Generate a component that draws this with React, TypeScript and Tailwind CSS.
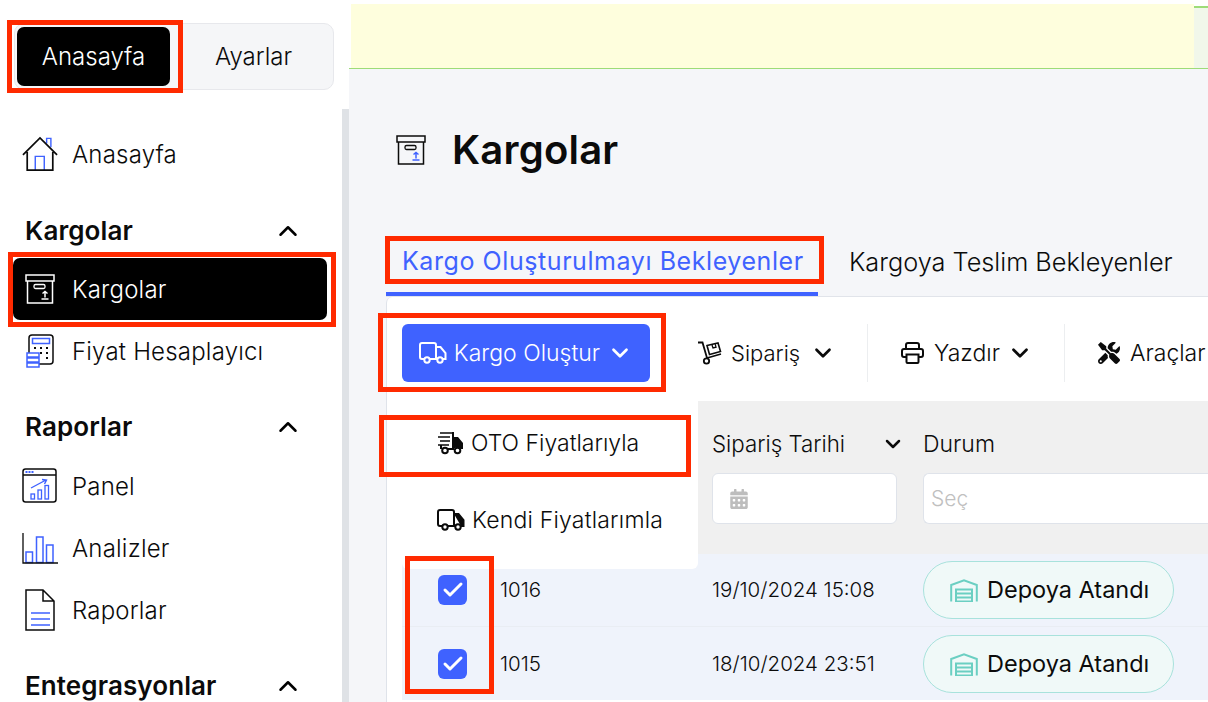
import React from "react";
import { ChevronDown, ChevronUp, Check } from "lucide-react";
import { FaCalendarAlt, FaTools } from "react-icons/fa";

const B = "#3f62ff";
const K = "#0b0b0b";

function HomeIcon() {
  return (
    <svg width="36" height="36" viewBox="0 0 38 38" fill="none" className="shrink-0">
      <path d="M26 8V2.500h4.500V12" stroke={B} strokeWidth="1.500" />
      <path d="M14 36V21.500h9.500V36" stroke={B} strokeWidth="1.500" />
      <path d="M1 20 19 2l18 18M5.500 17v19h27V17" stroke={K} strokeWidth="1.800" />
    </svg>
  );
}
function BoxIcon({ c = K, a = K, s = 30 }: { c?: string; a?: string; s?: number }) {
  return (
    <svg width={s} height={s} viewBox="0 0 30 30" fill="none" className="shrink-0">
      <path d="M1 1h28v6H1zM2.500 7v22h25V7" stroke={c} strokeWidth="1.500" />
      <rect x="9" y="10.500" width="11" height="4" rx="1.500" stroke={c} strokeWidth="1.300" />
      <path d="M20 17.500v6M17.500 19.500l2.500-2 2.500 2M16.500 25h7" stroke={a} strokeWidth="1.500" />
    </svg>
  );
}
function CalcIcon() {
  return (
    <svg width="30" height="34" viewBox="0 0 30 34" fill="none" className="shrink-0">
      <rect x="4" y="1" width="24" height="29" rx="3" stroke={K} strokeWidth="1.500" />
      <rect x="7.500" y="4.500" width="17" height="5" stroke={B} strokeWidth="1.500" />
      <path d="M9 14h2m4 0h2m4 0h2M15 19h2m4 0h2M21 24h2" stroke={K} strokeWidth="2" />
      <path d="M2 19h12v4H2zM2 24h12v4H2zM2 29h12v4H2z" fill="#fff" stroke={B} strokeWidth="1.500" />
    </svg>
  );
}
function PanelIcon() {
  return (
    <svg width="36" height="36" viewBox="0 0 36 36" fill="none" className="shrink-0">
      <rect x="1" y="1" width="33" height="33" rx="2.500" stroke={K} strokeWidth="1.500" />
      <path d="M1 7h33" stroke={K} strokeWidth="1.300" />
      <path d="M3.500 4h8" stroke={B} strokeWidth="2" strokeDasharray="2 1" />
      <path d="M9 20l15-8m-4-.5 4.500.5-2 4" stroke={B} strokeWidth="1.400" />
      <rect x="9" y="26" width="3.500" height="5" stroke={B} strokeWidth="1.300" />
      <rect x="16" y="22" width="3.500" height="9" stroke={B} strokeWidth="1.300" />
      <rect x="23" y="17.500" width="3.500" height="13.500" stroke={B} strokeWidth="1.300" />
    </svg>
  );
}
function BarsIcon() {
  return (
    <svg width="36" height="32" viewBox="0 0 36 32" fill="none" className="shrink-0">
      <path d="M4 20h6.500v10.500H4zM14.500 5H21v25.500h-6.500zM24.500 13H31v17.500h-6.500z" stroke={B} strokeWidth="1.500" />
      <path d="M1 1v30h35" stroke={K} strokeWidth="1.300" />
    </svg>
  );
}
function DocIcon() {
  return (
    <svg width="30" height="42" viewBox="0 0 30 42" fill="none" className="shrink-0">
      <path d="M1 1h17l11 11v29H1zM18 1v11h11" stroke={K} strokeWidth="1.500" />
      <path d="M6 24h19M6 30h19M6 36h19" stroke={B} strokeWidth="1.400" />
    </svg>
  );
}
function TruckIcon({ c = "#fff", solid = false, s = 28 }: { c?: string; solid?: boolean; s?: number }) {
  return (
    <svg width={s} height={s * 0.79} viewBox="0 0 28 22" fill="none" className="shrink-0">
      <path d="M5 17H3a2 2 0 0 1-2-2V3a2 2 0 0 1 2-2h12a2 2 0 0 1 2 2v14h-6" stroke={c} strokeWidth="2" />
      <path d="M17 5h4.500l5 6v6H24" stroke={c} strokeWidth="2" fill={solid ? c : "none"} />
      <circle cx="8" cy="18" r="2.700" stroke={c} strokeWidth="2" />
      <circle cx="21" cy="18" r="2.700" stroke={c} strokeWidth="2" />
    </svg>
  );
}
function FastTruck() {
  return (
    <svg width="27" height="24" viewBox="0 0 27 24" fill="none" className="shrink-0">
      <path d="M3 2h13M1 6h12M3 10h10M1 14h11" stroke={K} strokeWidth="1.700" />
      <path d="M4 18V14M16 1v17h-5" stroke={K} strokeWidth="2" />
      <path d="M16 6h5l5 6v6h-2.500L20 16l-4 2z" fill={K} />
      <circle cx="8" cy="19.500" r="2.800" stroke={K} strokeWidth="2" fill="#fff" />
      <circle cx="20.500" cy="19.500" r="2.800" stroke={K} strokeWidth="2" fill="#fff" />
    </svg>
  );
}
function HandTruck() {
  return (
    <svg width="26" height="24" viewBox="0 0 26 24" fill="none" className="shrink-0">
      <path d="M1 1.500h4.500L10 17l14-4" stroke={K} strokeWidth="1.800" />
      <path d="M10 4.500 21 2l2.500 8.500-11 3z" stroke={K} strokeWidth="1.600" />
      <path d="M15 4l1 3 3-.8-.8-3" stroke={K} strokeWidth="1.300" />
      <circle cx="9.500" cy="20" r="2.700" stroke={K} strokeWidth="1.800" />
    </svg>
  );
}
function PrinterIcon() {
  return (
    <svg width="23" height="22" viewBox="0 0 23 22" fill="none" className="shrink-0">
      <path d="M5 7V3a2 2 0 0 1 2-2h9a2 2 0 0 1 2 2v4M5 15H3a2 2 0 0 1-2-2V9a2 2 0 0 1 2-2h17a2 2 0 0 1 2 2v4a2 2 0 0 1-2 2h-2" stroke={K} strokeWidth="2" />
      <path d="M5.500 12.500h12V20a1 1 0 0 1-1 1h-10a1 1 0 0 1-1-1z" stroke={K} strokeWidth="2" />
    </svg>
  );
}
function Warehouse() {
  return (
    <svg width="28" height="23" viewBox="0 0 28 23" fill="none" className="mt-[1px] shrink-0">
      <path d="M1.200 22.500V6L14 1.200 26.800 6v16.500" stroke="#6bcfc2" strokeWidth="2" />
      <path d="M6 10.500h16v12H6zM6 14.500h16M6 18.500h16" stroke="#6bcfc2" strokeWidth="2" />
    </svg>
  );
}
const NavRow = ({ icon, label, cls = "" }: { icon: React.ReactNode; label: string; cls?: string }) => (
  <div className={`flex items-center ${cls}`}>
    <div className="mr-[15px] flex w-[36px] shrink-0 justify-center">{icon}</div>
    <span className="-ml-[1px] pt-[1px] text-[24px] font-light tracking-[0.2px]">{label}</span>
  </div>
);
const Section = ({ label, cls = "" }: { label: string; cls?: string }) => (
  <div className={`flex items-center justify-between pl-[3px] pr-[46px] ${cls}`}>
    <span className="text-[26px] font-semibold leading-[30px] tracking-[0.1px]">{label}</span>
    <ChevronUp size={30} strokeWidth={2} className="text-black" />
  </div>
);
const Box = ({ cls }: { cls: string }) => (
  <div className={`pointer-events-none absolute z-30 border-[5px] border-[#ff2a00] ${cls}`} />
);
const Status = () => (
  <div className="flex h-[58px] w-[251px] items-center gap-[9px] rounded-full border border-[#a8e2dc] bg-[#f0f9f8] pl-[26px]">
    <Warehouse />
    <span className="whitespace-nowrap text-[23.500px] font-normal">Depoya Atandı</span>
  </div>
);
const Row = ({ id, date, cls = "" }: { id: string; date: string; cls?: string }) => (
  <div className={`flex items-center bg-[#eff3fb] ${cls}`}>
    <div className="flex w-[98px] shrink-0 justify-end pr-[33px]">
      <div className="flex h-[30px] w-[29px] items-center justify-center rounded-[6px] bg-[#3f62ff]">
        <Check size={24} strokeWidth={3} className="text-white" />
      </div>
    </div>
    <span className="w-[212px] shrink-0 pt-[1px] text-[20.500px] font-light">{id}</span>
    <span className="w-[211px] shrink-0 pt-[1px] text-[20.500px] font-light">{date}</span>
    <Status />
  </div>
);

export default function App() {
  return (
    <div className="relative flex h-[702px] w-[1208px] overflow-hidden bg-white font-['Inter',sans-serif] text-[#0b0b0b]">
      <aside className="relative flex w-[349px] shrink-0 flex-col overflow-hidden bg-white pl-[14px] pt-[23px]">
        <div className="flex h-[67px] w-[320px] items-center rounded-[10px] border border-[#e7e8ec] bg-[#f5f6f8] pl-[2px]">
          <div className="flex h-[59px] w-[153px] items-center justify-center rounded-[7px] bg-black text-[24px] font-light text-white">Anasayfa</div>
          <div className="flex-1 pl-[4px] text-center text-[24px] font-light">Ayarlar</div>
        </div>
        <div className="absolute bottom-0 right-0 top-[109px] w-[7px] bg-[#dfe2e6]" />
        <div className="flex flex-col pl-[8px]">
          <NavRow icon={<HomeIcon />} label="Anasayfa" cls="mt-[44px] h-[40px]" />
          <Section label="Kargolar" cls="mt-[42px]" />
          <div className="-ml-[9px] mt-[12px] flex h-[62px] w-[314px] items-center rounded-[7px] bg-black pl-[9px] text-white">
            <NavRow icon={<BoxIcon c="#fff" a="#fff" />} label="Kargolar" />
          </div>
          <NavRow icon={<CalcIcon />} label="Fiyat Hesaplayıcı" cls="mt-[9px] h-[44px]" />
          <Section label="Raporlar" cls="mt-[39px]" />
          <NavRow icon={<PanelIcon />} label="Panel" cls="mt-[26px] h-[36px]" />
          <NavRow icon={<BarsIcon />} label="Analizler" cls="mt-[27px] h-[34px]" />
          <NavRow icon={<DocIcon />} label="Raporlar" cls="mt-[24px] h-[42px]" />
          <Section label="Entegrasyonlar" cls="mt-[40px]" />
        </div>
      </aside>

      <main className="relative flex min-w-0 flex-1 flex-col bg-[#f5f6f9]">
        <div className="flex h-[69px] shrink-0 border-b border-[#9ddc78] bg-white pl-[2px] pt-[4px]">
          <div className="w-[843px] bg-[#fefedd]" />
          <div className="mt-[2px] flex-1 border-t-2 border-[#9ddc78] bg-[#f1f7ea]" />
        </div>
        <div className="ml-[47px] mt-[59px] flex h-[44px] shrink-0 items-center gap-[26px]">
          <BoxIcon a={B} />
          <h1 className="text-[40px] font-semibold tracking-[0.2px]">Kargolar</h1>
        </div>
        <div className="ml-[37px] mt-[56px] flex h-[69px] shrink-0 items-end border-b border-[#e1e4ea]">
          <div className="flex h-[60px] w-[432px] items-start border-b-[4px] border-[#3f62ff] pl-[16px] pt-[7px]">
            <span className="whitespace-nowrap text-[25px] font-normal tracking-[0.57px] text-[#3f62ff]">Kargo Oluşturulmayı Bekleyenler</span>
          </div>
          <div className="flex h-[60px] items-start pl-[31px] pt-[7px]">
            <span className="whitespace-nowrap text-[25.300px] font-light">Kargoya Teslim Bekleyenler</span>
          </div>
        </div>
        <div className="ml-[37px] flex-1 rounded-tl-[6px] border-l border-[#dfe3ea] bg-white pl-[15px]">
          <div className="flex h-[104px] items-start pt-[27px]">
            <div className="flex h-[58px] w-[248px] shrink-0 items-center justify-center gap-[7px] rounded-[6px] bg-[#3f62ff] text-white">
              <TruckIcon />
              <span className="text-[23px] font-light">Kargo Oluştur</span>
              <ChevronDown size={26} strokeWidth={2.500} />
            </div>
            <div className="flex h-[58px] w-[218px] shrink-0 items-center gap-[8px] border-r border-[#eceef0] pl-[47px]">
              <HandTruck />
              <span className="text-[22px] font-light">Sipariş</span>
              <ChevronDown size={26} strokeWidth={2.500} className="ml-[2px]" />
            </div>
            <div className="flex h-[58px] w-[197px] shrink-0 items-center gap-[10px] border-r border-[#eceef0] pl-[33px]">
              <PrinterIcon />
              <span className="text-[23px] font-light">Yazdır</span>
              <ChevronDown size={26} strokeWidth={2.500} className="-ml-[3px]" />
            </div>
            <div className="flex h-[58px] shrink-0 items-center gap-[10px] pl-[33px]">
              <FaTools size={22} />
              <span className="text-[23px] font-light">Araçlar</span>
            </div>
          </div>
          <div className="flex h-[153px] bg-[#f0f0f0] pl-[310px] pt-[27px]">
            <div className="w-[185px] shrink-0">
              <div className="flex h-[32px] items-center justify-between">
                <span className="whitespace-nowrap text-[22.300px] font-light">Sipariş Tarihi</span>
                <ChevronDown size={24} strokeWidth={2.500} className="-mr-[8px]" />
              </div>
              <div className="mt-[13px] flex h-[51px] items-center rounded-[6px] border border-[#dfe3ea] bg-white pl-[16px]">
                <FaCalendarAlt size={20} className="text-[#bdbdbd]" />
              </div>
            </div>
            <div className="ml-[26px] flex-1">
              <div className="flex h-[32px] items-center text-[23px] font-light">Durum</div>
              <div className="mt-[13px] flex h-[51px] items-center rounded-l-[6px] border border-r-0 border-[#dfe3ea] bg-white pl-[7px] text-[21px] font-light text-[#c0c0c0]">Seç</div>
            </div>
          </div>
          <Row id="1016" date="19/10/2024 15:08" cls="h-[73px] border-b border-[#e9edf3]" />
          <Row id="1015" date="18/10/2024 23:51" cls="h-[73px]" />
        </div>

        <div className="absolute left-[53px] top-[394px] z-20 flex h-[175px] w-[296px] flex-col rounded-[6px] bg-white pl-[35px]">
          <div className="mt-[33px] flex h-[32px] items-center gap-[7px]">
            <FastTruck />
            <span className="whitespace-nowrap text-[23px] font-light">OTO Fiyatlarıyla</span>
          </div>
          <div className="mt-[45px] flex h-[32px] items-center gap-[7px]">
            <TruckIcon c={K} solid />
            <span className="whitespace-nowrap text-[23px] font-light tracking-[0.2px]">Kendi Fiyatlarımla</span>
          </div>
        </div>
      </main>

      <Box cls="left-[7px] top-[20px] h-[73px] w-[176px]" />
      <Box cls="left-[8px] top-[252px] h-[75px] w-[328px]" />
      <Box cls="left-[385px] top-[236px] h-[48px] w-[439px]" />
      <Box cls="left-[378px] top-[313px] h-[79px] w-[288px]" />
      <Box cls="left-[379px] top-[415px] h-[62px] w-[312px]" />
      <Box cls="left-[405px] top-[556px] h-[138px] w-[89px]" />
    </div>
  );
}
